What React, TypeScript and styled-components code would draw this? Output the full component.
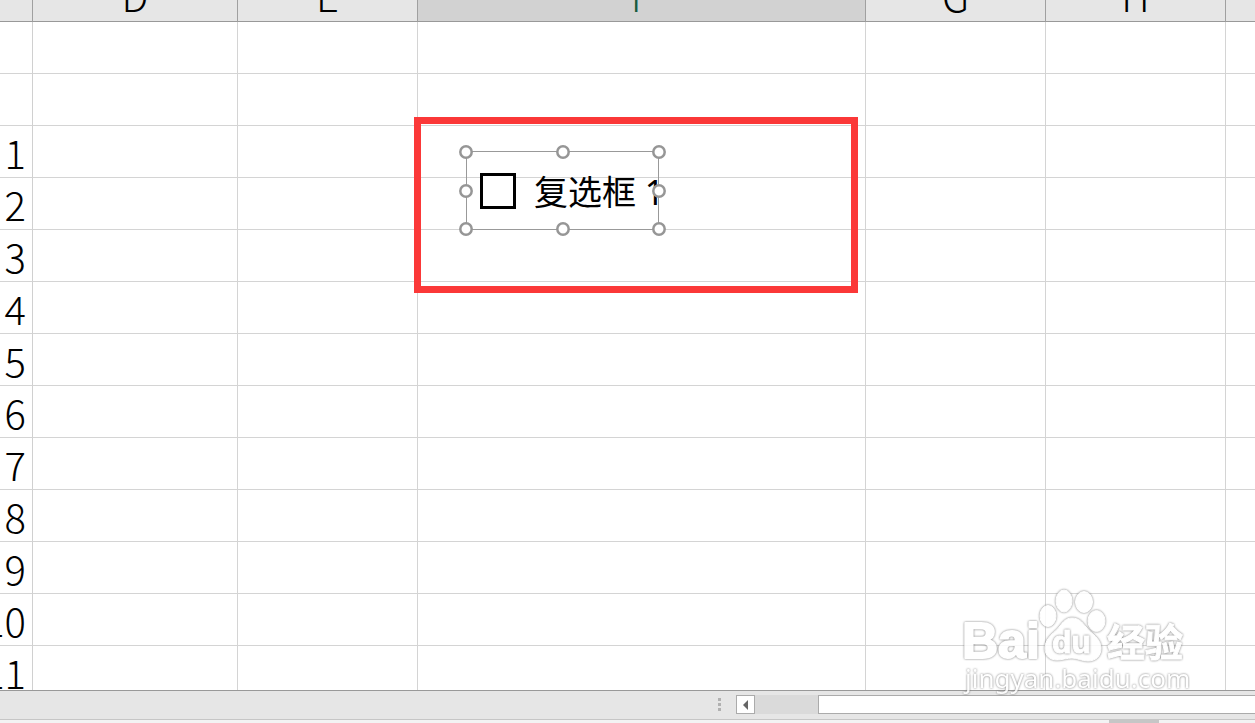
import React from 'react';
import styled, { createGlobalStyle } from 'styled-components';

const GlobalStyle = createGlobalStyle`
  *, *::before, *::after { box-sizing: border-box; }
  body { margin: 0; background: #fff; }
`;

const Workbook = styled.div`
  display: flex;
  flex-direction: column;
  height: 100vh;
  overflow: hidden;
  position: relative;
  color: #000;
  font-family: 'Noto Sans CJK SC', sans-serif;
`;

const Sheet = styled.main`
  flex: 1;
  min-height: 0;
  overflow: hidden;
  position: relative;
`;

const Grid = styled.table`
  width: 100%;
  table-layout: fixed;
  border-collapse: separate;
  border-spacing: 0;
  font-size: 40px;
  font-weight: 300;
  line-height: 52px;

  th:last-child,
  td:last-child {
    border-right: 0;
  }
`;

const Col = styled.col<{ $width?: number }>`
  width: ${({ $width }) => ($width ? `${$width}px` : 'auto')};
`;

const ColumnHead = styled.th<{ $active?: boolean }>`
  height: 22px;
  padding: 0;
  font-weight: 300;
  color: ${({ $active }) => ($active ? '#185c40' : '#000')};
  background: ${({ $active }) => ($active ? '#d2d2d2' : '#e6e6e6')};
  border-right: 1px solid #a0a0a0;
  border-bottom: 1px solid #999;
`;

const HeadLabel = styled.div`
  display: flex;
  align-items: flex-end;
  justify-content: center;
  height: 21px;
  overflow: hidden;
`;

const RowHead = styled.th`
  height: 52px;
  padding: 0;
  font-weight: 300;
  border-right: 1px solid #d0d0d0;
  border-bottom: 1px solid #d4d4d4;
`;

const RowLabel = styled.div`
  display: flex;
  justify-content: flex-end;
  height: 51px;
  padding-right: 6px;
  overflow: hidden;
`;

const Cell = styled.td`
  padding: 0;
  border-right: 1px solid #d4d4d4;
  border-bottom: 1px solid #d4d4d4;
`;

const Highlight = styled.div`
  position: absolute;
  left: 414px;
  top: 117px;
  width: 444px;
  height: 176px;
  border: 7px solid #fb3838;
`;

const Control = styled.div`
  position: absolute;
  left: 466px;
  top: 151px;
  width: 193px;
  height: 79px;
  outline: 1px solid #999;
  outline-offset: -1px;
`;

const CheckLabel = styled.label`
  display: flex;
  align-items: center;
  gap: 18px;
  height: 100%;
  padding-left: 14px;
  overflow: hidden;
  white-space: nowrap;
  font: 400 34px/40px 'Noto Sans', 'Noto Sans CJK SC', sans-serif;
`;

const CheckBox = styled.input`
  appearance: none;
  flex: none;
  width: 36px;
  height: 36px;
  margin: 0;
  border: 3px solid #000;
  background: #fff;
`;

const CheckText = styled.span`
  padding-top: 2px;
`;

const Handle = styled.svg<{ $x: number; $y: number }>`
  position: absolute;
  left: ${({ $x }) => $x}%;
  top: ${({ $y }) => $y}%;
  width: 14px;
  height: 14px;
  margin: -6px 0 0 -7px;
  fill: #fff;
  stroke: #969696;
`;

const ScrollRow = styled.div`
  display: grid;
  grid-template-columns: 4fr 3fr;
  height: 30px;
  border-top: 1px solid #999;
  border-bottom: 1px solid #c6c6c6;
  background: #e6e6e6;
`;

const ScrollArea = styled.div`
  grid-column: 2;
  display: flex;
  align-items: center;
  min-width: 0;
  padding-bottom: 1px;
`;

const Grip = styled.div`
  display: flex;
  flex-direction: column;
  gap: 2px;
  margin-right: 15px;
  padding-left: 1px;
`;

const Dot = styled.i`
  width: 3px;
  height: 3px;
  background: #b1b1b1;
`;

const ScrollButton = styled.button`
  display: flex;
  align-items: center;
  justify-content: center;
  flex: none;
  width: 19px;
  height: 19px;
  padding: 0;
  border: 1px solid #ababab;
  background: #fff;
`;

const Track = styled.div`
  flex: 1;
  height: 19px;
  padding-left: 63px;
  background: #dadada;
`;

const Thumb = styled.div`
  height: 19px;
  border: 1px solid #ababab;
  border-right: 0;
  background: #fff;
`;

const StatusBar = styled.footer`
  display: flex;
  justify-content: flex-end;
  height: 3px;
  padding-right: 96px;
  background: #f3f3f3;
`;

const StatusItem = styled.div`
  width: 50px;
  background: #c6c6c6;
`;

const Watermark = styled.svg`
  position: absolute;
  right: 65px;
  bottom: 23px;
  width: 230px;
  height: 115px;
  pointer-events: none;
  opacity: 0.85;
  fill: #fff;
  stroke: #fff;
  stroke-width: 1px;
  stroke-linejoin: round;

  > * {
    filter: drop-shadow(0 0 1px #666);
  }
`;

const Brand = styled.text`
  font: 700 50px 'Liberation Sans', sans-serif;
  stroke-width: 2px;
`;

const BrandSmall = styled.text`
  font: 700 32px 'Liberation Sans', sans-serif;
`;

const BrandChinese = styled.text`
  font: 700 38px 'Noto Sans CJK SC', sans-serif;
`;

const Site = styled.text`
  font: 400 26px 'Noto Sans', sans-serif;
  stroke: none;
`;

const columns = [
  { name: '', width: 33 },
  { name: 'D', width: 205 },
  { name: 'E', width: 180 },
  { name: 'F', width: 448, active: true },
  { name: 'G', width: 180 },
  { name: 'H', width: 180 },
  { name: '' },
];

const rows = ['', '', '1', '2', '3', '4', '5', '6', '7', '8', '9', '10', '11'];

const handles = [
  [0, 0], [50, 0], [100, 0],
  [0, 49], [100, 49],
  [0, 98], [50, 98], [100, 98],
];

export default function App() {
  return (
    <Workbook>
      <GlobalStyle />
      <Sheet>
        <Grid>
          <colgroup>
            {columns.map((c, i) => <Col key={i} $width={c.width} />)}
          </colgroup>
          <thead>
            <tr>
              {columns.map((c, i) => (
                <ColumnHead key={i} scope="col" $active={c.active}>
                  <HeadLabel>{c.name}</HeadLabel>
                </ColumnHead>
              ))}
            </tr>
          </thead>
          <tbody>
            {rows.map((r, i) => (
              <tr key={i}>
                <RowHead scope="row"><RowLabel>{r}</RowLabel></RowHead>
                {columns.slice(1).map((_, j) => <Cell key={j} />)}
              </tr>
            ))}
          </tbody>
        </Grid>
        <Highlight />
        <Control>
          <CheckLabel>
            <CheckBox type="checkbox" />
            <CheckText>复选框 1</CheckText>
          </CheckLabel>
          {handles.map(([x, y]) => (
            <Handle key={`${x}-${y}`} $x={x} $y={y} viewBox="0 0 14 14">
              <circle cx="7" cy="7" r="5.7" strokeWidth="2.5" />
            </Handle>
          ))}
        </Control>
      </Sheet>
      <ScrollRow>
        <ScrollArea>
          <Grip><Dot /><Dot /><Dot /></Grip>
          <ScrollButton aria-label="Scroll left">
            <svg width="6" height="10" viewBox="0 0 6 10"><path d="M5 0v10L0 5z" fill="#666" /></svg>
          </ScrollButton>
          <Track><Thumb /></Track>
        </ScrollArea>
      </ScrollRow>
      <StatusBar><StatusItem /></StatusBar>
      <Watermark viewBox="0 0 230 115" aria-hidden="true">
        <ellipse cx="88" cy="31" rx="8" ry="10.5" />
        <ellipse cx="104" cy="16" rx="8" ry="11" />
        <ellipse cx="124" cy="17" rx="8.5" ry="10.5" />
        <ellipse cx="136.5" cy="36" rx="8.5" ry="10.5" />
        <path d="M112 33c-6 0-9 4-12 8-4 6-15 11-15 22 0 8 5 12 12 12 5 0 10-2 15-2s10 3 16 3c8 0 13-5 13-13 0-10-10-14-15-21-4-5-7-9-14-9z" />
        <Brand x="2" y="73">Bai</Brand>
        <BrandSmall x="92" y="68">du</BrandSmall>
        <BrandChinese x="147" y="71">经验</BrandChinese>
        <Site x="5" y="103">jingyan.baidu.com</Site>
      </Watermark>
    </Workbook>
  );
}
